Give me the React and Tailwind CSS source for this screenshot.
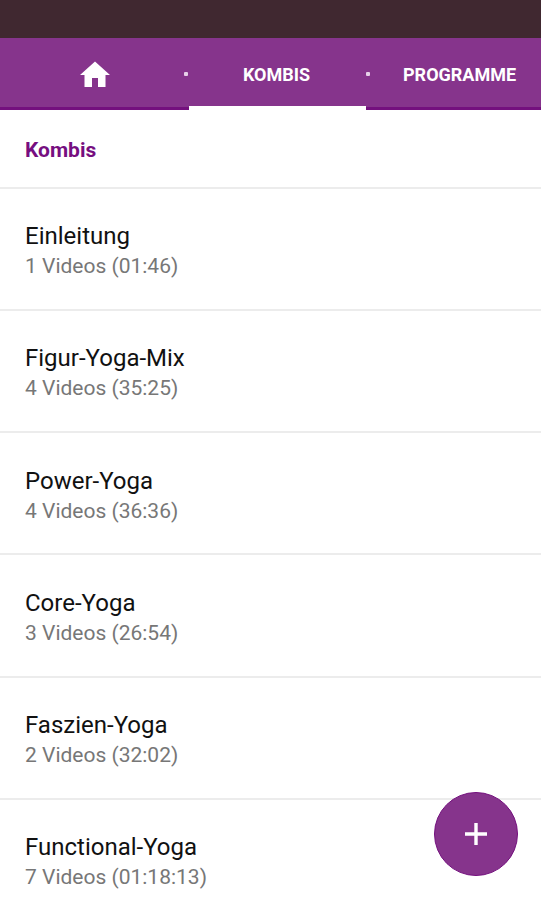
import React from "react";
import { MdHome } from "react-icons/md";

const combos = [
  { title: "Einleitung", info: "1 Videos (01:46)" },
  { title: "Figur-Yoga-Mix", info: "4 Videos (35:25)" },
  { title: "Power-Yoga", info: "4 Videos (36:36)" },
  { title: "Core-Yoga", info: "3 Videos (26:54)" },
  { title: "Faszien-Yoga", info: "2 Videos (32:02)" },
  { title: "Functional-Yoga", info: "7 Videos (01:18:13)" },
];

function Tabs() {
  return (
    <nav className="h-[72px] shrink-0 flex bg-[#86348c] text-white text-[18px] font-bold">
      <div className="relative w-[189px] border-b-[3px] border-[#74107e] flex items-center justify-center pt-[4px]">
        <MdHome className="size-[36px]" />
        <span className="absolute right-[1px] top-[34px] size-[4px] rounded-[1px] bg-[#e6cfe8]" />
      </div>
      <div className="relative w-[177px] border-b-[4px] border-white flex items-center justify-center pt-[5px] pr-[2px]">
        <span>KOMBIS</span>
      </div>
      <div className="relative flex-1 border-b-[3px] border-[#74107e] flex items-center pl-[37px] pt-[4px]">
        <span className="absolute left-0 top-[34px] size-[4px] rounded-[1px] bg-[#e6cfe8]" />
        <span>PROGRAMME</span>
      </div>
    </nav>
  );
}

export default function App() {
  return (
    <div className="relative w-[541px] h-[900px] overflow-hidden flex flex-col bg-white font-['Roboto',sans-serif]">
      {/* status bar */}
      <div className="h-[38px] shrink-0 bg-[#402830]" />
      <Tabs />

      <h1 className="h-[78.6px] shrink-0 border-b-2 border-[#ececec] flex items-center px-[25px] pt-[5px] text-[21px] font-bold text-[#760e80]">
        Kombis
      </h1>

      <ul>
        {combos.map((combo) => (
          <li
            key={combo.title}
            className="h-[122.3px] border-b-2 border-[#ececec] px-[25px] pt-[32.4px]"
          >
            <p className="text-[24px] leading-[30px] text-[#111]">
              {combo.title}
            </p>
            <p className="text-[21px] leading-[30px] text-[#777]">
              {combo.info}
            </p>
          </li>
        ))}
      </ul>

      {/* add button */}
      <button className="absolute left-[433.5px] top-[792px] size-[84px] rounded-full bg-[#86348c] border border-[#74107e] flex items-center justify-center">
        <svg className="size-[24px]" viewBox="0 0 24 24" fill="none">
          <path d="M12 1v22M1 12h22" stroke="white" strokeWidth="3.4" />
        </svg>
      </button>
    </div>
  );
}
